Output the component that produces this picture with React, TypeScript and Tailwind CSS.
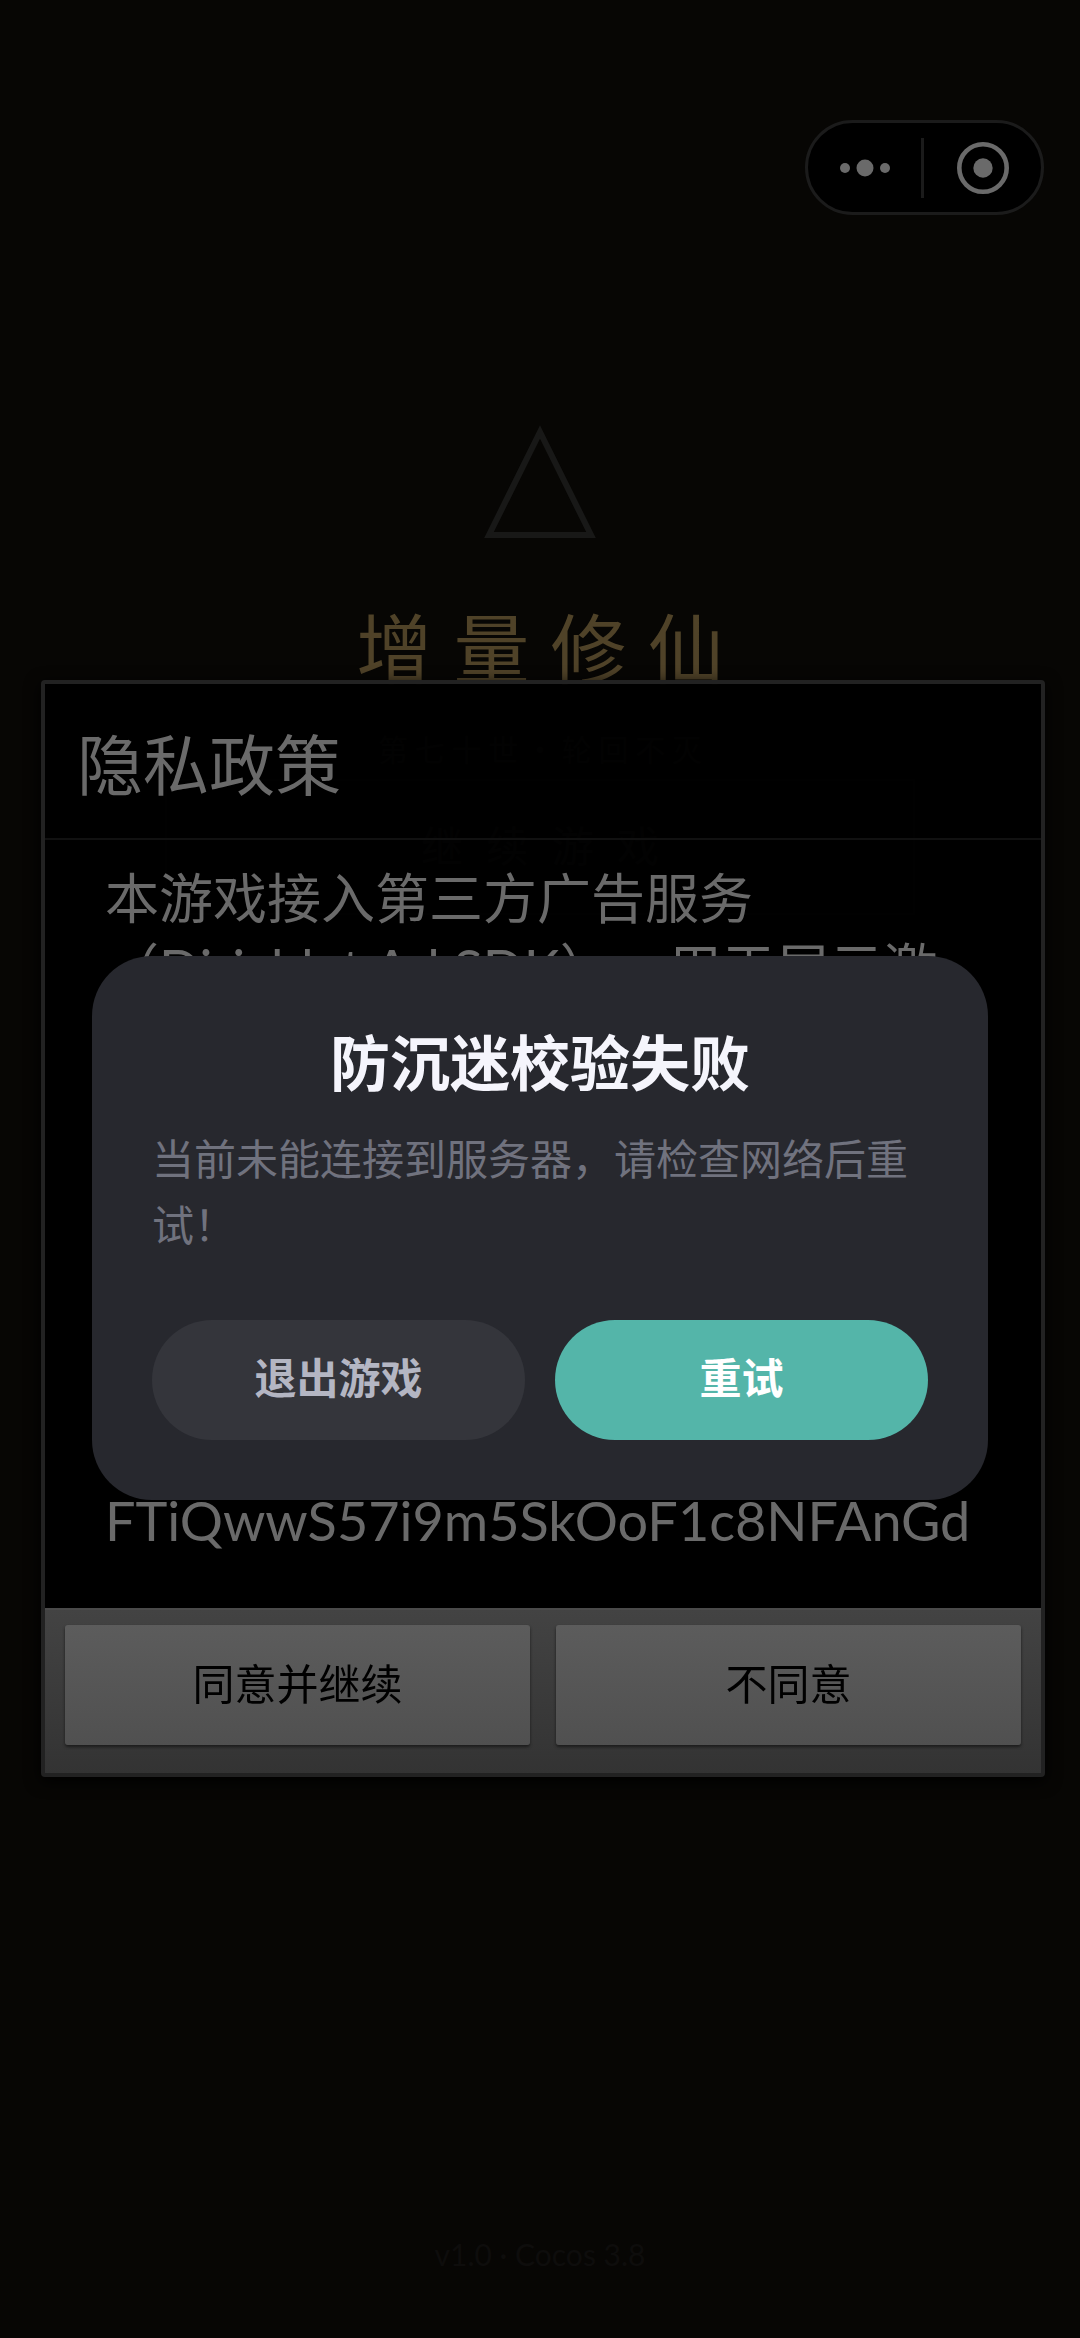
const policyLines = ["本游戏接入第三方广告服务", "（Dirichlet Ad SDK），用于展示激"];

const Capsule = () => {
  return (
    <div className="flex justify-end px-9 pt-[120px]">
      <div className="flex h-[95px] w-[239px] items-center rounded-full border-[3px] border-[#1b1b1b] bg-black">
        <button
          type="button"
          aria-label="更多"
          className="flex h-full w-[113px] items-center justify-center"
        >
          <svg width="50" height="18" viewBox="0 0 50 18" fill="#6a6a6a">
            <circle cx="5" cy="9" r="5" />
            <circle cx="25" cy="9" r="8.5" />
            <circle cx="45" cy="9" r="5" />
          </svg>
        </button>
        <div className="h-[60px] w-[3px] bg-[#1b1b1b]" />
        <button
          type="button"
          aria-label="关闭"
          className="flex h-full flex-1 items-center justify-center"
        >
          <svg width="52" height="52" viewBox="0 0 52 52" fill="none">
            <circle cx="26" cy="26" r="23.7" stroke="#6a6a6a" strokeWidth="4.6" />
            <circle cx="26" cy="26" r="9.7" fill="#6a6a6a" />
          </svg>
        </button>
      </div>
    </div>
  );
};

const GameHome = () => {
  return (
    <div className="flex flex-1 flex-col items-center pt-[210px] pb-16">
      <svg width="114" height="114" viewBox="0 0 114 114" fill="none">
        <path d="M57 7 L108 110 H6 Z" stroke="#181817" strokeWidth="6" />
      </svg>
      <h1 className="mt-14 font-['Liberation_Sans','Noto_Sans_CJK_SC',sans-serif] text-[76px] leading-[114px] text-[#4f4228]">
        增 量 修 仙
      </h1>
      <p className="mt-4 font-['Noto_Sans_CJK_SC',sans-serif] text-[30px] leading-[46px] text-[#1a1918]">
        第 七 十 世 · 轮 回 不 灭
      </p>
      <button
        type="button"
        className="mt-2 h-[136px] w-[750px] border-2 border-[#121212] font-['Liberation_Sans','Noto_Sans_CJK_SC',sans-serif] text-[42px] whitespace-pre text-[#1a1a1a]"
      >
        继  续  游  戏
      </button>
      <p className="mt-auto text-[30px] leading-[40px] text-[#0e0d0c]">
        v1.0 · Cocos 3.8
      </p>
    </div>
  );
};

const PolicyDialog = () => {
  return (
    <div className="fixed inset-0 flex items-center pt-[118px] pr-[35px] pl-[41px]">
      <section
        aria-label="隐私政策"
        className="w-full rounded-[4px] border-4 border-[#222222] bg-black/90 shadow-[0_4px_16px_#000000]"
      >
        <h2 className="border-b-2 border-[#111111] px-8 pt-8 pb-6 text-[66px] leading-[98px] text-[#6a6a6a]">
          隐私政策
        </h2>
        <div className="flex h-[768px] flex-col justify-between overflow-hidden px-[60px] pt-6 pb-[52px] text-[54px] leading-[70px] whitespace-nowrap text-[#6a6a6a] [text-spacing-trim:space-all]">
          <div>
            {policyLines.map((line) => (
              <p key={line}>{line}</p>
            ))}
          </div>
          <p>FTiQwwS57i9m5SkOoF1c8NFAnGd</p>
        </div>
        <div className="flex gap-[26px] border-t-2 border-[#4a4a4a] bg-linear-to-b from-[#434343] to-[#333333] px-5 pt-[15px] pb-7">
          <button
            type="button"
            className="h-[120px] flex-1 rounded-[3px] bg-linear-to-b from-[#5c5c5c] to-[#505050] text-[42px] text-black shadow-[0_2px_3px_#1c1c1c]"
          >
            同意并继续
          </button>
          <button
            type="button"
            className="h-[120px] flex-1 rounded-[3px] bg-linear-to-b from-[#5c5c5c] to-[#505050] text-[42px] text-black shadow-[0_2px_3px_#1c1c1c]"
          >
            不同意
          </button>
        </div>
      </section>
    </div>
  );
};

const VerifyDialog = () => {
  return (
    <div className="fixed inset-0 flex items-center px-[92px] pt-[118px]">
      <section
        role="dialog"
        aria-labelledby="verify-title"
        className="w-full rounded-[60px] bg-[#27282e] p-[60px]"
      >
        <h2
          id="verify-title"
          className="text-center text-[60px] leading-[94px] font-bold text-[#f5f5fc]"
        >
          防沉迷校验失败
        </h2>
        <p className="mt-4 text-[42px] leading-[66px] text-[#70727e]">
          当前未能连接到服务器，请检查网络后重试！
        </p>
        <div className="mt-[62px] flex gap-[30px]">
          <button
            type="button"
            className="h-[120px] flex-1 rounded-full bg-[#34353b] pb-1 text-[42px] font-bold text-[#b4b6c3]"
          >
            退出游戏
          </button>
          <button
            type="button"
            className="h-[120px] flex-1 rounded-full bg-[#54b5a9] pb-1 text-[42px] font-bold text-white"
          >
            重试
          </button>
        </div>
      </section>
    </div>
  );
};

const App = () => {
  return (
    <main
      lang="zh-CN"
      className="flex min-h-screen flex-col bg-[#070604] font-[Lato,'Noto_Sans_CJK_SC',sans-serif]"
    >
      <Capsule />
      <GameHome />
      <PolicyDialog />
      <VerifyDialog />
    </main>
  );
};

export default App;
